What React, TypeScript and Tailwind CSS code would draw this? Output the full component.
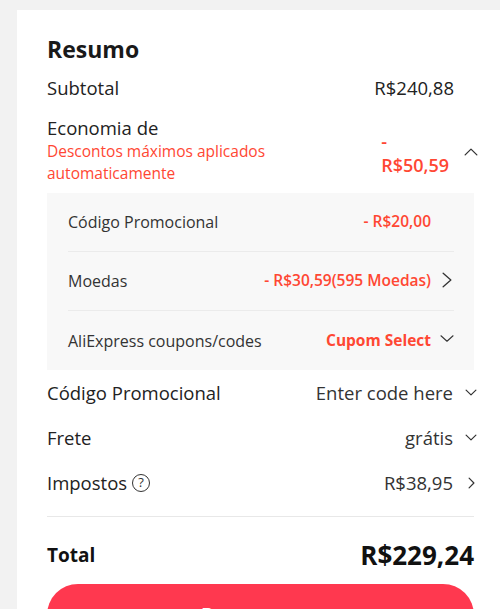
const font = { fontFamily: '"Open Sans", "Noto Sans", sans-serif' };

type Dir = "up" | "down" | "right";

function Chevron({ dir, w, h, stroke = 1.3 }: { dir: Dir; w: number; h: number; stroke?: number }) {
  const p = stroke / 2 + 0.5;
  let points = "";
  if (dir === "down") points = `${p},${p} ${w / 2},${h - p} ${w - p},${p}`;
  if (dir === "up") points = `${p},${h - p} ${w / 2},${p} ${w - p},${h - p}`;
  if (dir === "right") points = `${p},${p} ${w - p},${h / 2} ${p},${h - p}`;
  return (
    <svg width={w} height={h} viewBox={`0 0 ${w} ${h}`} fill="none" stroke="#333" strokeWidth={stroke} strokeLinecap="round" strokeLinejoin="round">
      <polyline points={points} />
    </svg>
  );
}

function Row({ label, value, icon }: { label: React.ReactNode; value: string; icon: React.ReactNode }) {
  return (
    <div className="flex items-center justify-between h-[45px] text-[18.5px] text-[#222]">
      <div className="flex items-center">{label}</div>
      <div className="flex items-center -mr-[4px]">
        <span className="text-[#333]">{value}</span>
        <span className="w-[14px] ml-[11px] flex justify-center">{icon}</span>
      </div>
    </div>
  );
}

function InnerRow({ label, children, border }: { label: string; children: React.ReactNode; border?: boolean }) {
  return (
    <div className={`flex items-center justify-between h-[59px] ${border ? "border-b border-[#ebebeb]" : ""}`}>
      <span className="text-[16px] text-[#333]">{label}</span>
      {children}
    </div>
  );
}

export default function App() {
  return (
    <div className="min-h-screen bg-[#f2f2f2] pl-[17px] pt-[10px] overflow-hidden" style={font}>
      <div className="bg-white pl-[30px] pt-[24px] pb-[20px]">
        <div className="w-[427px]">
          <h2 className="text-[23px] font-bold text-[#191919] leading-[30px]">Resumo</h2>

          <div className="flex items-center justify-between h-[40px] text-[18.5px] text-[#222] mt-[4px]">
            <span>Subtotal</span>
            <span className="mr-[20px]">R$240,88</span>
          </div>

          <div className="flex justify-between items-start pt-[8px] pb-[9px]">
            <div>
              <div className="text-[18.5px] text-[#222] leading-[24px]">Economia de</div>
              <div className="text-[15.5px] text-[#ff4733] leading-[22px] w-[250px]">
                Descontos máximos aplicados automaticamente
              </div>
            </div>
            <div className="flex items-center pt-[13px] -mr-[4px]">
              <div className="text-[18px] font-semibold text-[#ff4733] leading-[24px]">
                <div>-</div>
                <div>R$50,59</div>
              </div>
              <span className="ml-[15px] -mt-[3px] flex">
                <Chevron dir="up" w={14} h={8} />
              </span>
            </div>
          </div>

          <div className="bg-[#f8f8f8] pl-[21px] pr-[20px]">
            <InnerRow label="Código Promocional" border>
              <span className="flex items-center">
                <span className="text-[15.5px] text-[#ff4733] font-semibold">- R$20,00</span>
                <span className="w-[14px] ml-[9px]" />
              </span>
            </InnerRow>
            <InnerRow label="Moedas" border>
              <span className="flex items-center">
                <span className="text-[15.5px] text-[#ff4733] font-semibold">- R$30,59(595 Moedas)</span>
                <span className="w-[14px] ml-[9px] flex justify-center -mt-[2px]">
                  <Chevron dir="right" w={10} h={16} />
                </span>
              </span>
            </InnerRow>
            <InnerRow label="AliExpress coupons/codes">
              <span className="flex items-center">
                <span className="text-[15.5px] text-[#ff4733] font-bold">Cupom Select</span>
                <span className="w-[14px] ml-[9px] flex justify-center -mt-[4px]">
                  <Chevron dir="down" w={17} h={9} />
                </span>
              </span>
            </InnerRow>
          </div>

          <Row label="Código Promocional" value="Enter code here" icon={<Chevron dir="down" w={12} h={7} stroke={1.2} />} />
          <Row label="Frete" value="grátis" icon={<Chevron dir="down" w={12} h={7} stroke={1.2} />} />
          <Row
            label={
              <>
                Impostos
                <span className="ml-[5px] w-[18px] h-[18px] rounded-full border border-[#333] text-[13px] leading-none flex items-center justify-center text-[#333]">
                  ?
                </span>
              </>
            }
            value="R$38,95"
            icon={<Chevron dir="right" w={7} h={12} stroke={1.2} />}
          />

          <div className="border-t border-[#e8e8e8] mt-[11px]" />

          <div className="flex items-center justify-between h-[67px] pt-[10px]">
            <span className="text-[19px] font-bold text-[#111]">Total</span>
            <span className="text-[26px] font-bold text-[#111]">R$229,24</span>
          </div>

          <button
            type="button"
            className="w-full h-[62px] rounded-[31px] bg-[#ff384f] text-white text-[20px] font-bold"
          >
            Pagar agora
          </button>
        </div>
      </div>
    </div>
  );
}
